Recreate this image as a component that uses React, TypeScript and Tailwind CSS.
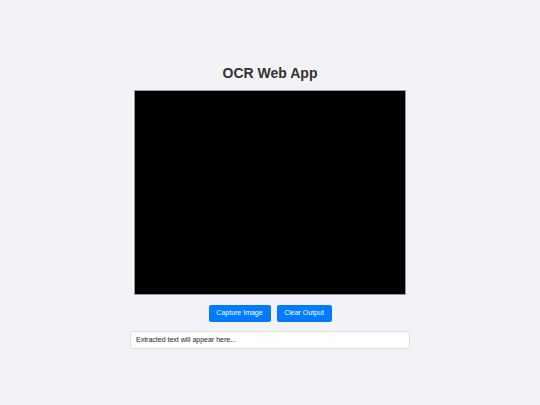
import React from "react";

export default function App() {
  return (
    <div
      className="min-h-screen w-full bg-[#f2f2f7] flex flex-col items-center"
      style={{ fontFamily: '"Liberation Sans", Arial, sans-serif' }}
    >
      <h1 className="mt-[63px] text-[14px] leading-[20px] font-bold text-[#333]">
        OCR Web App
      </h1>
      <div className="mt-[7px] w-[272px] h-[205px] bg-black border border-[#999]" />
      <div className="mt-[10px] flex gap-[6px]">
        <button className="h-[17px] w-[62px] rounded-[2px] bg-[#007bff] text-white text-[7px]">
          Capture Image
        </button>
        <button className="h-[17px] w-[55px] rounded-[2px] bg-[#007bff] text-white text-[7px]">
          Clear Output
        </button>
      </div>
      <div className="mt-[9px] w-[280px] h-[18px] bg-white border border-[#ddd] rounded-[3px] px-[5px] flex items-center text-[7px] text-[#222]">
        Extracted text will appear here...
      </div>
    </div>
  );
}
